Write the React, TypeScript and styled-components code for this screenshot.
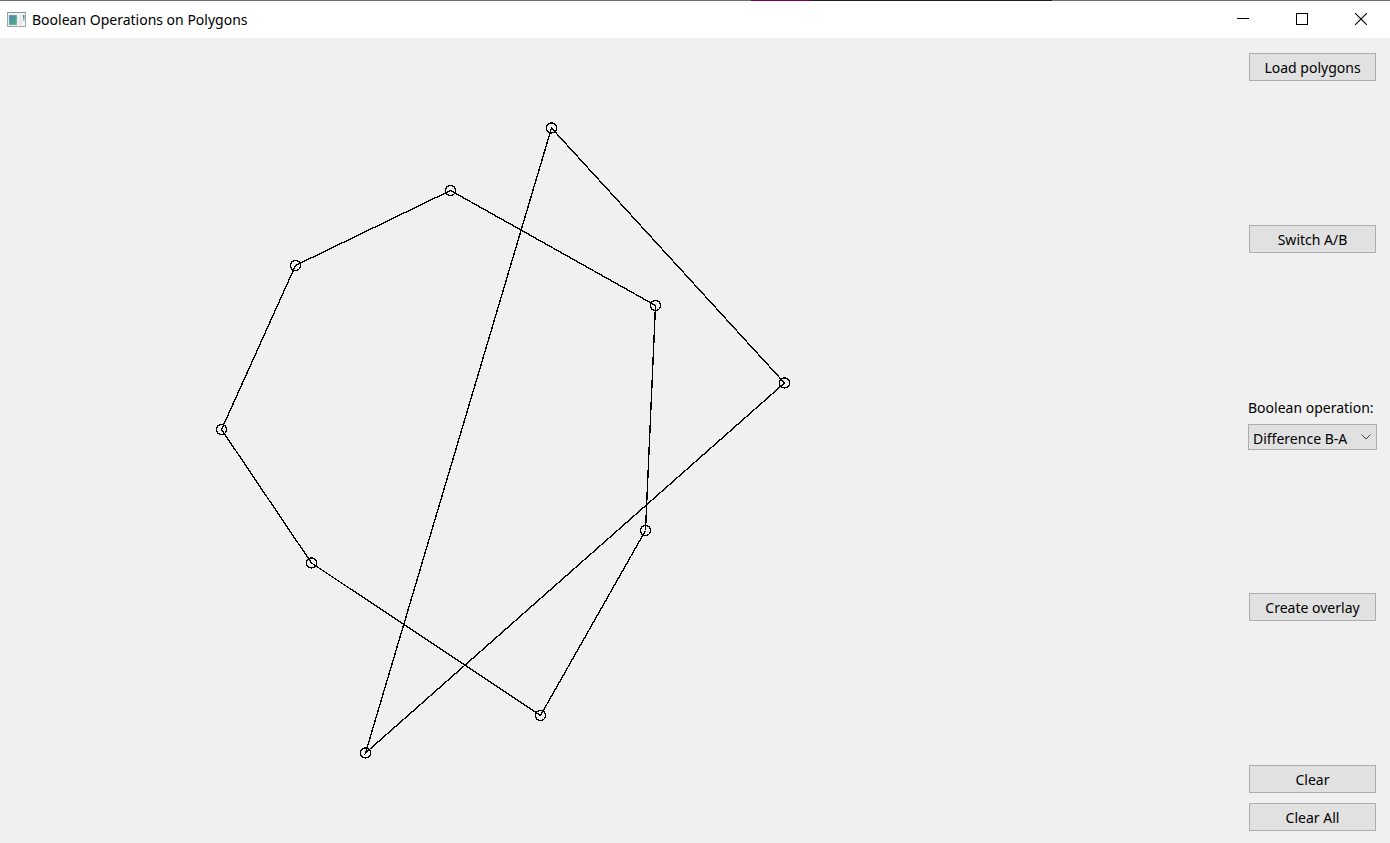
import React, { useState } from "react";
import styled, { createGlobalStyle } from "styled-components";

const GlobalStyle = createGlobalStyle`
  * {
    box-sizing: border-box;
  }
  body {
    margin: 0;
    background: #f0f0f0;
    color: #000;
    font-family: "Segoe UI", "Noto Sans", "Open Sans", sans-serif;
    font-size: 14px;
    line-height: 20px;
  }
`;

const Window = styled.div`
  display: flex;
  flex-direction: column;
  min-height: 100vh;
`;

const TopEdge = styled.div`
  display: flex;
  height: 1px;
`;

const EdgeSegment = styled.div<{ $share: number; $color: string }>`
  flex: ${(p) => p.$share} 1 0;
  background: ${(p) => p.$color};
`;

const TitleBar = styled.header`
  display: flex;
  align-items: center;
  height: 37px;
  padding-left: 7px;
  background: #fff;
`;

const Title = styled.h1`
  flex: 1;
  margin: 0 0 0 6px;
  font-size: 14px;
  font-weight: 400;
`;

const CaptionButton = styled.button`
  display: flex;
  align-items: center;
  justify-content: center;
  width: 59px;
  height: 37px;
  padding: 0 0 2px;
  border: 0;
  background: transparent;

  &:hover {
    background: #e5e5e5;
  }
`;

const Content = styled.main`
  display: flex;
  flex: 1;
`;

const Canvas = styled.svg`
  flex: 1;
  min-width: 0;
  align-self: stretch;
  fill: none;
  stroke: #000;
  stroke-width: 1.35px;
  shape-rendering: crispEdges;
`;

const Sidebar = styled.aside`
  display: flex;
  flex-direction: column;
  justify-content: space-between;
  width: 155px;
  padding: 15px 13px 12px;
`;

const Group = styled.div<{ $gap: number }>`
  display: flex;
  flex-direction: column;
  gap: ${(p) => p.$gap}px;
`;

const PushButton = styled.button`
  height: 28px;
  margin: 0 1px;
  padding: 2px 0 0;
  border: 1px solid #adadad;
  background: #e1e1e1;
  color: #000;
  font: inherit;

  &:hover {
    border-color: #0078d7;
    background: #e5f1fb;
  }
`;

const Label = styled.label`
  padding-top: 1px;
  white-space: nowrap;
`;

const SelectFrame = styled.div`
  display: grid;
  align-items: center;
  height: 26px;

  > * {
    grid-area: 1 / 1;
  }
`;

const Select = styled.select`
  appearance: none;
  width: 100%;
  height: 26px;
  padding: 4px 4px 0;
  border: 1px solid #adadad;
  border-radius: 0;
  background: #e1e1e1;
  color: #000;
  font: inherit;
`;

const Chevron = styled.svg`
  justify-self: end;
  margin-right: 6px;
  pointer-events: none;
`;

type Point = [number, number];

const polygons: Point[][] = [
  [
    [450.5, 152.5],
    [655.5, 267.5],
    [645.5, 492.5],
    [540.5, 677.5],
    [311.5, 525],
    [221.5, 391.5],
    [295.5, 227.5],
  ],
  [
    [551.5, 90],
    [784.5, 345],
    [365.5, 715],
  ],
];

const operations = ["Intersection", "Union", "Difference A-B", "Difference B-A"];

function AppIcon() {
  return (
    <svg width="19" height="16" viewBox="0 0 19 16" aria-hidden="true">
      <defs>
        <linearGradient id="pane" x1="0" y1="0" x2="1" y2="1">
          <stop offset="0" stopColor="#4a7fb0" />
          <stop offset="1" stopColor="#55b878" />
        </linearGradient>
        <linearGradient id="strip" x1="0" y1="0" x2="0" y2="1">
          <stop offset="0" stopColor="#3c74a8" />
          <stop offset="1" stopColor="#8fcfa8" />
        </linearGradient>
      </defs>
      <rect x="0.5" y="0.5" width="18" height="14" fill="#f4f4f4" stroke="#a2a7ab" />
      <path d="M0 0.5h19" stroke="#8b9094" />
      <rect x="2" y="3" width="8" height="10" fill="url(#pane)" stroke="#b8cdd5" strokeWidth="0.5" />
      <rect x="12" y="3" width="3" height="10" fill="#e7e7e7" />
      <rect x="16" y="3" width="1.5" height="6" fill="url(#strip)" />
    </svg>
  );
}

export default function App() {
  const [operation, setOperation] = useState("Difference B-A");

  return (
    <>
      <GlobalStyle />
      <Window>
        <TopEdge>
          <EdgeSegment $share={751} $color="#6e6e6e" />
          <EdgeSegment $share={60} $color="#7a0055" />
          <EdgeSegment $share={241} $color="#1e1e1e" />
          <EdgeSegment $share={338} $color="#6e6e6e" />
        </TopEdge>
        <TitleBar>
          <AppIcon />
          <Title>Boolean Operations on Polygons</Title>
          <CaptionButton aria-label="Minimize">
            <svg width="12" height="12" viewBox="0 0 12 12" stroke="#000">
              <path d="M0 5.5h12" shapeRendering="crispEdges" />
            </svg>
          </CaptionButton>
          <CaptionButton aria-label="Maximize">
            <svg width="12" height="12" viewBox="0 0 12 12" fill="none" stroke="#000">
              <rect x="0.5" y="0.5" width="11" height="11" shapeRendering="crispEdges" />
            </svg>
          </CaptionButton>
          <CaptionButton aria-label="Close">
            <svg width="12" height="12" viewBox="0 0 12 12" stroke="#000" strokeWidth="1.1">
              <path d="M0 0L12 12M12 0L0 12" />
            </svg>
          </CaptionButton>
        </TitleBar>
        <Content>
          <Canvas role="img" aria-label="Polygons A and B">
            {polygons.map((points, i) => (
              <g key={i}>
                <polygon points={points.map((p) => p.join(",")).join(" ")} />
                {points.map(([x, y]) => (
                  <circle key={`${x}-${y}`} cx={x} cy={y} r="5" />
                ))}
              </g>
            ))}
          </Canvas>
          <Sidebar>
            <PushButton>Load polygons</PushButton>
            <PushButton>Switch A/B</PushButton>
            <Group $gap={6}>
              <Label htmlFor="operation">Boolean operation:</Label>
              <SelectFrame>
                <Select
                  id="operation"
                  value={operation}
                  onChange={(e) => setOperation(e.target.value)}
                >
                  {operations.map((name) => (
                    <option key={name}>{name}</option>
                  ))}
                </Select>
                <Chevron width="10" height="6" viewBox="0 0 10 6" fill="none" stroke="#444">
                  <path d="M0.5 0.5L5 5L9.5 0.5" />
                </Chevron>
              </SelectFrame>
            </Group>
            <PushButton>Create overlay</PushButton>
            <Group $gap={10}>
              <PushButton>Clear</PushButton>
              <PushButton>Clear All</PushButton>
            </Group>
          </Sidebar>
        </Content>
      </Window>
    </>
  );
}
